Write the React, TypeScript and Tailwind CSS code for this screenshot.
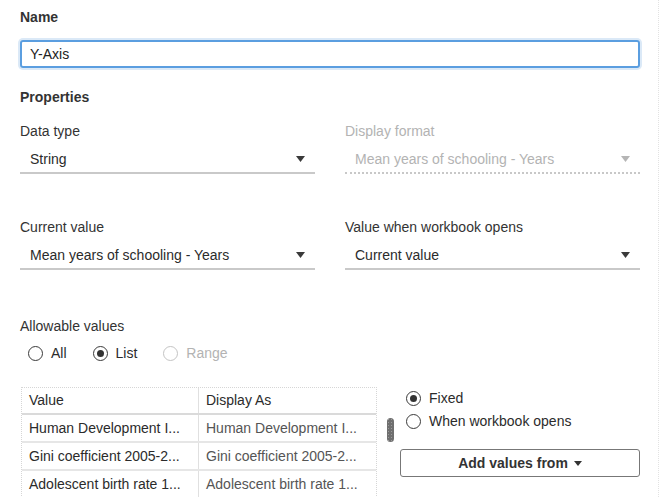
import { ReactNode } from "react";

const font = { fontFamily: '"Liberation Sans", Arial, sans-serif' };

function Caret({ disabled }: { disabled?: boolean }) {
  return (
    <svg width="9" height="6" viewBox="0 0 9 6" className="shrink-0">
      <path d="M0 0 L9 0 L4.5 6 Z" fill={disabled ? "#b5b5b5" : "#3a3a3a"} />
    </svg>
  );
}

function Select({ value, disabled }: { value: string; disabled?: boolean }) {
  return (
    <div
      className={`mt-[4px] h-[29px] flex items-center justify-between pl-[10px] pr-[10px] border-b-2 ${
        disabled ? "border-dotted border-[#c8c8c8] text-[#b3b3b3]" : "border-[#c9c9c9] text-[#2b2b2b]"
      }`}
    >
      <span className="text-[14px] leading-[20px]">{value}</span>
      <Caret disabled={disabled} />
    </div>
  );
}

function Field({ label, value, disabled }: { label: string; value: string; disabled?: boolean }) {
  return (
    <div className="flex flex-col">
      <div className={`text-[14px] leading-[20px] ${disabled ? "text-[#b3b3b3]" : "text-[#333]"}`}>{label}</div>
      <Select value={value} disabled={disabled} />
    </div>
  );
}

function Radio({ checked, disabled, children }: { checked?: boolean; disabled?: boolean; children: ReactNode }) {
  return (
    <div className="flex items-center gap-[8px]">
      <span
        className={`w-[15px] h-[15px] rounded-full border flex items-center justify-center ${
          disabled ? "border-[#c4c4c4]" : "border-[#3a3a3a]"
        }`}
      >
        {checked && <span className="w-[7px] h-[7px] rounded-full bg-[#333]" />}
      </span>
      <span className={`text-[14px] leading-[20px] ${disabled ? "text-[#b3b3b3]" : "text-[#2b2b2b]"}`}>
        {children}
      </span>
    </div>
  );
}

const rows = [
  ["Human Development I...", "Human Development I..."],
  ["Gini coefficient 2005-2...", "Gini coefficient 2005-2..."],
  ["Adolescent birth rate 1...", "Adolescent birth rate 1..."],
];

export default function App() {
  return (
    <div style={font} className="w-[660px] h-[497px] bg-white overflow-hidden">
      <div className="w-[659px] h-full border-r border-dotted border-[#e2e2e2] pl-[20px] pr-[18px]">
        {/* Name */}
        <div className="pt-[7px] text-[14px] leading-[20px] font-bold text-[#333]">Name</div>
        <div className="mt-[13px] h-[28px] rounded-[3px] border-2 border-[#5b9ee0] shadow-[0_0_0_2px_#dbe9f7] flex items-center pl-[8px] text-[14px] text-[#222]">
          Y-Axis
        </div>

        {/* Properties */}
        <div className="mt-[19px] text-[14px] leading-[20px] font-bold text-[#333]">Properties</div>

        <div className="mt-[14px] grid grid-cols-2 gap-x-[30px]">
          <Field label="Data type" value="String" />
          <Field label="Display format" value="Mean years of schooling - Years" disabled />
        </div>

        <div className="mt-[43px] grid grid-cols-2 gap-x-[30px]">
          <Field label="Current value" value="Mean years of schooling - Years" />
          <Field label="Value when workbook opens" value="Current value" />
        </div>

        {/* Allowable values */}
        <div className="mt-[46px] text-[14px] leading-[20px] text-[#333]">Allowable values</div>
        <div className="mt-[7px] flex items-center gap-[26px] pl-[8px]">
          <Radio>All</Radio>
          <Radio checked>List</Radio>
          <Radio disabled>Range</Radio>
        </div>

        <div className="mt-[24px] flex items-start">
          {/* table */}
          <div className="w-[356px] ml-[1px] border border-dotted border-[#d6d6d6] text-[14px] text-[#2b2b2b]">
            <div className="grid grid-cols-[177px_1fr] h-[27px] border-b-2 border-[#dadada]">
              <div className="flex items-center pl-[7px] border-r border-[#e0e0e0]">Value</div>
              <div className="flex items-center pl-[7px]">Display As</div>
            </div>
            {rows.map((r, i) => (
              <div key={i} className="grid grid-cols-[177px_1fr] h-[28px] border-b-2 border-[#e6e6e6]">
                <div className="flex items-center pl-[7px] border-r border-[#e0e0e0] whitespace-nowrap overflow-hidden">
                  {r[0]}
                </div>
                <div className="flex items-center pl-[7px] text-[#555] whitespace-nowrap overflow-hidden">{r[1]}</div>
              </div>
            ))}
          </div>

          {/* scrollbar */}
          <div className="ml-[10px] mt-[31px] w-[7px] h-[24px] rounded-full bg-[#6f6f6f] bg-[radial-gradient(#9a9a9a_0.6px,transparent_0.8px)] bg-[length:3px_3px]" />

          {/* right panel */}
          <div className="ml-[6px] flex-1 flex flex-col">
            <div className="pl-[6px] flex flex-col gap-[3px] pt-[1px]">
              <Radio checked>Fixed</Radio>
              <Radio>When workbook opens</Radio>
            </div>
            <button className="mt-[18px] h-[28px] rounded-[3px] border border-[#777] bg-white flex items-center justify-center gap-[6px] text-[14px] font-bold text-[#333]">
              Add values from
              <svg width="8" height="5" viewBox="0 0 8 5">
                <path d="M0 0 L8 0 L4 5 Z" fill="#333" />
              </svg>
            </button>
          </div>
        </div>
      </div>
    </div>
  );
}
